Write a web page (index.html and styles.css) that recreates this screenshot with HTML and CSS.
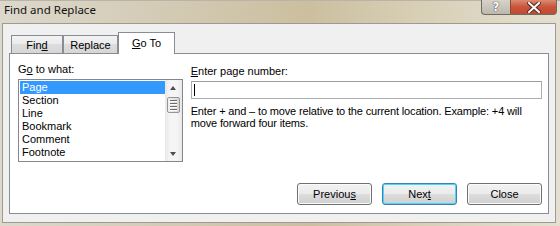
FILE: index.html
```html
<!DOCTYPE html>
<html lang="en">
<head>
  <meta charset="UTF-8" />
  <title>Find and Replace</title>
  <link rel="stylesheet" href="styles.css">
</head>
<body>
  <div class="window">
    <div class="titlebar">
      <div class="title">Find and Replace</div>
      <div class="caption-btns">
        <div class="cap-btn help">?</div>
        <div class="cap-btn close">
          <svg width="14" height="11" viewBox="0 0 14 11">
            <path d="M2 1 L12 10 M12 1 L2 10" stroke="#5a2a22" stroke-width="4" stroke-linecap="square"/>
            <path d="M2 1 L12 10 M12 1 L2 10" stroke="#ffffff" stroke-width="2" stroke-linecap="square"/>
          </svg>
        </div>
      </div>
    </div>

    <div class="client">
      <div class="tabs">
        <div class="tab">Fin<u>d</u></div>
        <div class="tab tab-wide">Replace</div>
        <div class="tab active"><u>G</u>o To</div>
      </div>

      <div class="panel">
        <div class="row">
          <div class="col-left">
            <div class="label">G<u>o</u> to what:</div>
            <div class="listbox">
              <div class="items">
                <div class="item selected">Page</div>
                <div class="item">Section</div>
                <div class="item">Line</div>
                <div class="item">Bookmark</div>
                <div class="item">Comment</div>
                <div class="item">Footnote</div>
              </div>
              <div class="scrollbar">
                <div class="arrow up"></div>
                <div class="thumb"><span></span><span></span><span></span><span></span></div>
                <div class="track"></div>
                <div class="arrow down"></div>
              </div>
            </div>
          </div>
          <div class="col-right">
            <div class="label"><u>E</u>nter page number:</div>
            <div class="input"><span class="caret"></span></div>
            <div class="help-text">Enter + and &ndash; to move relative to the current location. Example: +4 will move forward four items.</div>
          </div>
        </div>

        <div class="buttons">
          <button class="btn">Previou<u>s</u></button>
          <button class="btn default">Nex<u>t</u></button>
          <button class="btn">Close</button>
        </div>
      </div>
    </div>
  </div>
</body>
</html>
```

FILE: styles.css
```css
body {
  margin: 0;
  width: 560px;
  height: 226px;
  overflow: hidden;
  font-family: "Liberation Sans", Arial, sans-serif;
  font-size: 11px;
  color: #000;
}

.window {
  display: flex;
  flex-direction: column;
  height: 226px;
  background: linear-gradient(90deg, #dcd8cc 0%, #d2c8b0 35%, #cbbf9f 55%, #d8cfb6 75%, #e4dfd0 100%);
}

.titlebar {
  height: 23px;
  display: flex;
  justify-content: space-between;
  align-items: flex-start;
  padding: 0 3px 0 4px;
  border-top: 1px solid #b9b4a8;
  box-sizing: border-box;
}

.title {
  font-family: "Noto Sans", "Liberation Sans", sans-serif;
  font-size: 11.5px;
  line-height: 20px;
  margin-top: -1px;
  color: #111;
}

.caption-btns {
  display: flex;
  margin-top: -1px;
}

.cap-btn {
  height: 15px;
  display: flex;
  align-items: center;
  justify-content: center;
  box-sizing: border-box;
  border: 1px solid #6f6b62;
  border-top: none;
}

.help {
  width: 29px;
  border-radius: 0 0 0 4px;
  border-right: none;
  background: linear-gradient(#d7d3c8, #bdb8ad);
  color: #fff;
  font-family: "DejaVu Sans", sans-serif;
  font-weight: bold;
  font-size: 12px;
  line-height: 13px;
  text-shadow: 0 0 1px #333, 0 0 1px #333;
}

.close {
  width: 47px;
  border-radius: 0 0 4px 0;
  background: linear-gradient(#dc8a72, #c8553b 50%, #c14a33);
  border-left: 1px solid #8c4a30;
}

.client {
  flex: 1;
  margin: 0 4px 3px 2px;
  border: 1px solid #9d9a92;
  background: #f0f0f0;
  padding: 8px 6px 8px 6px;
  display: flex;
  flex-direction: column;
}

.tabs {
  display: flex;
  align-items: flex-end;
  height: 21px;
  padding-left: 2px;
}

.tab {
  width: 52px;
  height: 18px;
  box-sizing: border-box;
  border: 1px solid #898c95;
  border-bottom: none;
  background: linear-gradient(#f3f3f3, #ebebeb 45%, #dddddd 50%, #d6d6d6);
  text-align: center;
  line-height: 18px;
}

.tab-wide {
  width: 55px;
}

.active {
  width: 57px;
  height: 22px;
  margin-bottom: -1px;
  background: #fff;
  line-height: 20px;
  position: relative;
  z-index: 1;
}

.panel {
  flex: 1;
  background: #fff;
  border: 1px solid #898c95;
  padding: 9px 6px 8px 8px;
  display: flex;
  flex-direction: column;
}

.row {
  display: flex;
  gap: 8px;
}

.col-left {
  width: 165px;
}

.col-right {
  width: 352px;
  padding-top: 2px;
}

.label {
  line-height: 13px;
  margin-bottom: 3px;
}

.listbox {
  height: 83px;
  box-sizing: border-box;
  border: 1px solid #828790;
  display: flex;
  padding: 1px 0 1px 1px;
}

.items {
  flex: 1;
}

.item {
  height: 13px;
  line-height: 13px;
  padding-left: 2px;
}

.selected {
  background: #3399ff;
  color: #fff;
}

.scrollbar {
  width: 17px;
  margin-top: -1px;
  margin-bottom: -1px;
  display: flex;
  flex-direction: column;
  align-items: center;
  background: linear-gradient(90deg, #e8e8e8, #f5f5f5 30%, #f5f5f5 70%, #e8e8e8);
}

.arrow {
  width: 17px;
  height: 17px;
  position: relative;
}

.arrow::after {
  content: "";
  position: absolute;
  left: 5px;
  width: 0;
  height: 0;
  border-left: 3px solid transparent;
  border-right: 3px solid transparent;
}

.up::after {
  top: 6px;
  border-bottom: 4px solid #4d4d4d;
}

.down::after {
  top: 8px;
  border-top: 4px solid #4d4d4d;
}

.thumb {
  width: 13px;
  height: 16px;
  box-sizing: border-box;
  border: 1px solid #959595;
  border-radius: 2px;
  background: linear-gradient(90deg, #f2f2f2, #e4e4e4 50%, #d6d6d6);
  display: flex;
  flex-direction: column;
  align-items: center;
  justify-content: center;
  gap: 1px;
}

.thumb span {
  width: 7px;
  height: 1px;
  background: #6c6c6c;
  border-bottom: 1px solid #fff;
}

.track {
  flex: 1;
}

.input {
  height: 18px;
  box-sizing: border-box;
  border: 1px solid #abadb3;
  border-top-color: #9b9da3;
  position: relative;
}

.caret {
  position: absolute;
  left: 2px;
  top: 2px;
  width: 1px;
  height: 12px;
  background: #000;
}

.help-text {
  margin-top: 6px;
  line-height: 12px;
  letter-spacing: -0.15px;
}

.buttons {
  margin-top: auto;
  display: flex;
  justify-content: flex-end;
  gap: 10px;
}

.btn {
  width: 75px;
  height: 22px;
  font-family: "Liberation Sans", Arial, sans-serif;
  font-size: 11px;
  color: #000;
  border: 1px solid #707070;
  border-radius: 3px;
  background: linear-gradient(#f2f2f2, #ebebeb 48%, #dddddd 52%, #cfcfcf);
  box-shadow: inset 0 0 0 1px #fbfbfb;
  padding: 0;
}

.default {
  border-color: #3c7fb1;
  box-shadow: inset 0 0 0 1px #48d6fb;
}
```
